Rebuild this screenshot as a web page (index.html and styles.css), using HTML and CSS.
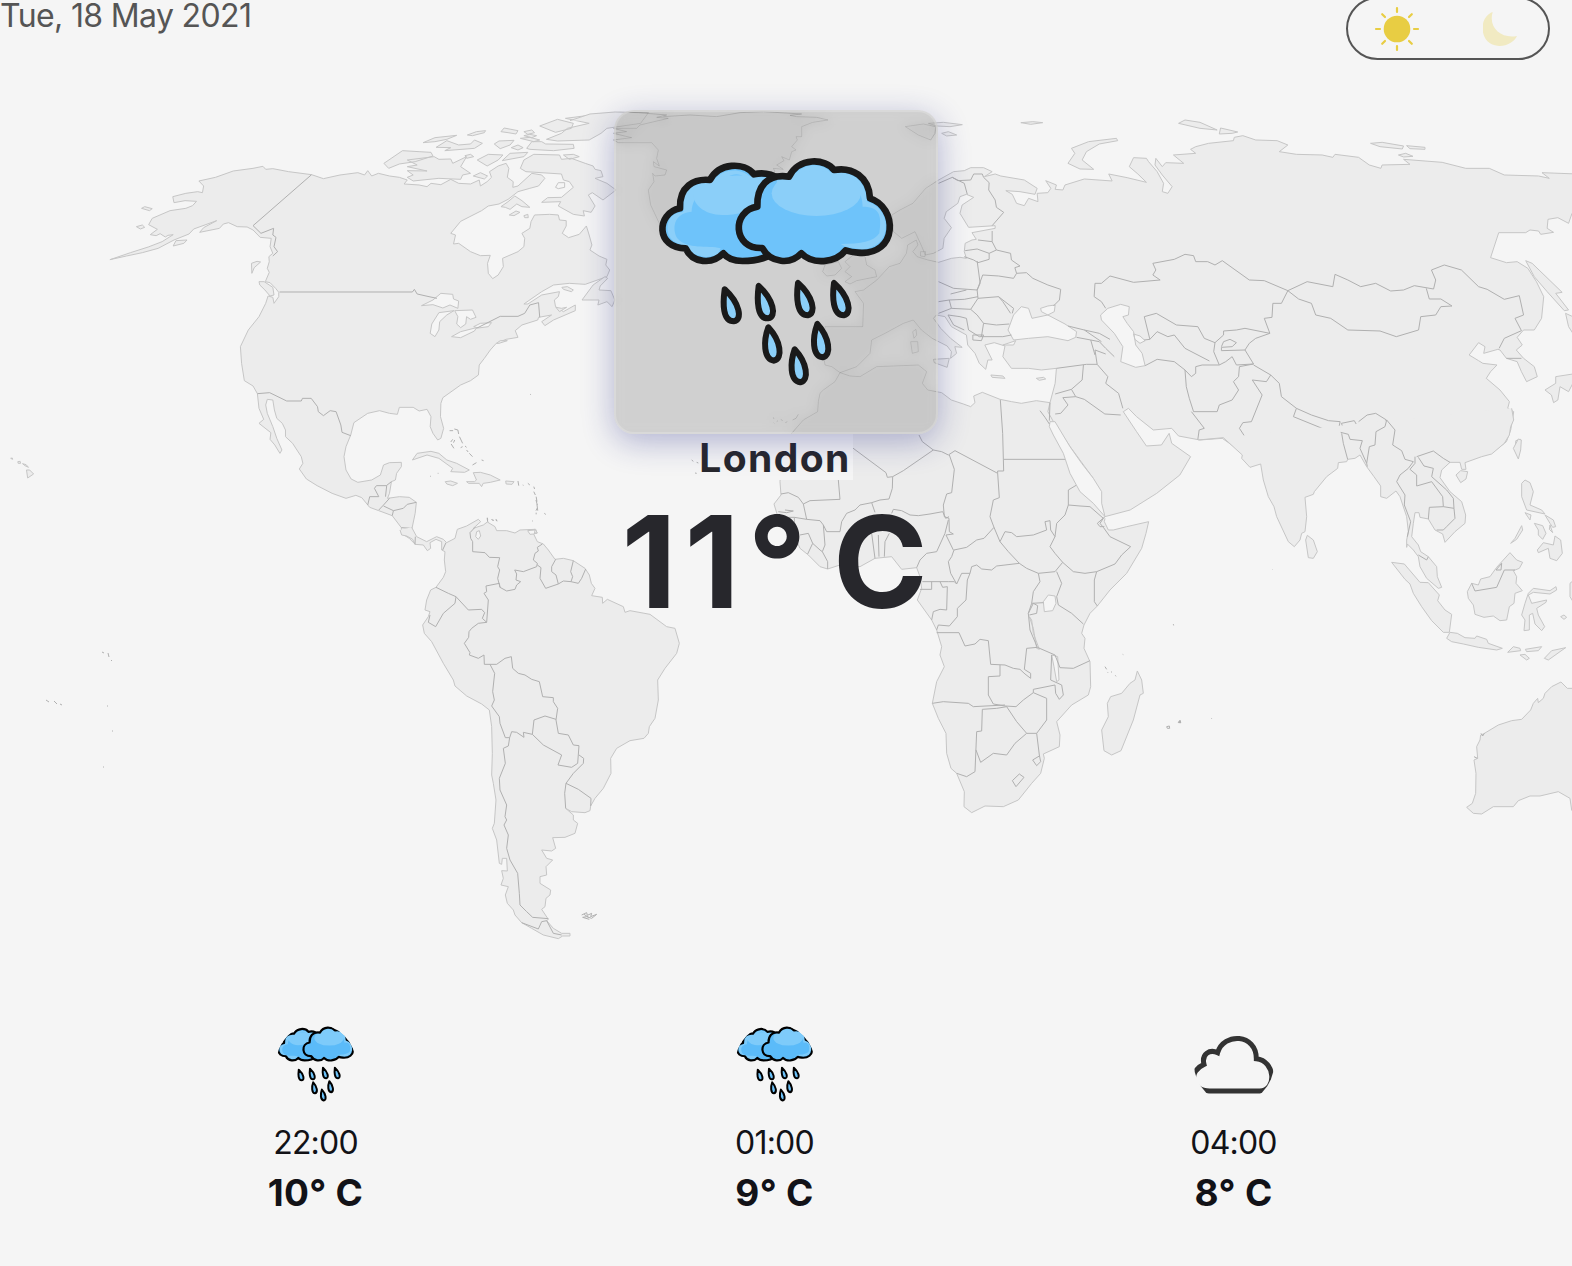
FILE: index.html
```html
<!DOCTYPE html>
<html lang="en">
<head>
<meta charset="utf-8">
<title>Weather</title>
<link rel="stylesheet" href="styles.css">
</head>
<body>
<svg class="map" viewBox="0 0 1572 1266" aria-hidden="true">
  <g id="world">
  <!-- North America -->
  <g transform="translate(0 100) scale(.3954 .33333)">
    <path class="land" d="M1050,1333L1035,1315 1015,1300 1015,1283 992,1247 958,1232 935,1222 915,1193 900,1186 875,1195 840,1180 802,1157 775,1137 757,1107 766,1090 762,1070 740,1030 722,1010 722,990 714,970 700,955 694,930 690,900 676,898 672,915 676,940 690,980 700,1015 713,1050 708,1060 695,1035 683,1018 685,998 655,970 667,958 655,925 651,881 640,858 618,842 611,790 608,740 628,690 655,650 672,610 678,588 690,592 693,610 705,590 705,577 697,565 683,548 671,545 681,517 676,505 681,485 680,470 690,460 683,440 686,415 658,412 640,390 625,381 600,380 578,368 565,372 555,385 505,397 515,383 548,362 490,387 478,402 440,420 400,445 360,458 320,468 278,479 330,458 375,441 410,425 438,404 425,406 418,411 405,401 395,407 380,404 398,388 376,374 385,355 430,332 470,325 487,317 497,304 468,302 440,308 437,290 470,280 500,275 512,278 515,258 503,243 545,232 590,213 640,205 665,199 672,208 690,206 730,215 788,224 818,236 860,225 905,218 922,225 930,212 940,228 957,220 985,228 1010,232 1030,240 1022,252 1060,255 1080,260 1090,250 1115,254 1140,238 1160,250 1190,252 1212,240 1215,258 1232,245 1243,232 1238,215 1260,198 1280,190 1287,205 1283,232 1298,245 1297,262 1310,258 1345,220 1370,225 1378,235 1362,258 1340,265 1310,275 1285,298 1262,312 1235,318 1218,332 1165,364 1140,400 1152,405 1147,432 1160,430 1190,455 1215,467 1240,466 1233,490 1235,520 1246,536 1260,525 1273,500 1271,475 1310,455 1325,440 1327,415 1320,400 1340,385 1343,365 1352,345 1390,343 1412,345 1415,360 1432,362 1432,378 1422,400 1438,413 1465,403 1483,378 1490,405 1497,435 1492,450 1515,468 1535,478 1532,495 1542,510 1535,530 1480,553 1440,550 1400,555 1370,575 1325,612 1335,612 1370,585 1415,575 1412,590 1402,600 1405,620 1425,635 1455,615 1455,632 1400,660 1378,677 1370,665 1395,645 1362,652 1360,660 1320,675 1303,692 1310,712 1280,718 1255,730 1240,750 1225,775 1212,795 1210,825 1190,842 1165,855 1120,893 1115,910 1114,950 1122,985 1115,1015 1107,1020 1095,1000 1088,980 1090,950 1080,928 1060,933 1045,922 1010,922 1005,943 985,940 960,932 930,940 895,968 887,1005 875,1040 870,1070 875,1110 888,1137 905,1147 940,1140 962,1125 970,1095 985,1088 1015,1087 1015,1100 1003,1120 1000,1140 990,1145 985,1180 980,1195 1010,1190 1035,1192 1053,1207 1050,1240 1042,1285 1040,1300 1055,1315"/>
    <path class="water" d="M1066,617L1095,600 1115,580 1145,583 1147,597 1160,603 1158,625 1138,615 1120,624 1095,614ZM1088,700L1092,672 1110,638 1148,632 1130,645 1112,665 1110,690 1100,710ZM1150,632L1195,630 1204,652 1190,658 1180,650 1178,672 1165,683 1155,672 1158,650ZM1142,710L1165,695 1205,683 1200,693 1165,713ZM1198,680L1215,670 1243,668 1235,680 1210,684Z"/>
    <path class="land" d="M1267,320L1285,305 1302,288 1320,302 1340,322 1320,320 1307,312 1290,328 1278,322ZM1288,345L1305,333 1315,337 1300,347ZM1325,347L1335,343 1336,353 1327,353ZM1472,600L1500,555 1530,530 1537,535 1518,558 1515,570 1545,572 1555,600 1548,620 1535,605 1512,615 1515,600ZM1421,562L1435,560 1450,570 1445,575 1425,568ZM1406,622L1420,625 1433,622 1415,635ZM655,545L668,545 690,562 693,585 683,588 670,570 657,555ZM637,520L636,490 650,484 659,486 643,503ZM438,438L445,422 473,420 465,430ZM358,325L366,320 385,326 378,332ZM345,380L360,375 366,382 355,387ZM971,190L1018,152 1060,155 1090,157 1095,168 1050,185 1010,192 983,205ZM1030,180L1098,170 1110,178 1140,177 1145,190 1180,170 1165,200 1190,220 1170,225 1165,238 1110,235 1045,243 1030,232 1045,225 1030,212 1080,213 1030,200 1055,195ZM1070,128L1100,113 1155,106 1130,118 1100,125ZM1103,142L1130,122 1160,135 1190,132 1200,120 1220,130 1200,145 1125,152 1140,143ZM1182,105L1205,95 1228,92 1225,98 1195,107ZM1250,132L1262,123 1300,121 1290,135 1265,146ZM1267,95L1275,84 1310,92 1305,102 1285,98ZM1325,95L1345,90 1352,98 1335,103ZM1316,115L1340,112 1365,120 1350,125ZM1332,145L1345,125 1370,125 1380,132 1450,133 1452,145 1400,152 1340,148ZM1293,143L1310,135 1323,143 1310,150ZM1325,107L1340,103 1357,107 1345,113ZM1365,78L1410,58 1450,70 1445,85 1405,97ZM1430,55L1510,43 1568,37 1640,38 1620,70 1535,85 1520,100 1490,120 1410,123 1382,118 1420,100 1435,85 1490,70ZM1207,180L1235,163 1272,165 1260,180 1232,198ZM1270,182L1290,160 1335,157 1325,170ZM1197,228L1215,218 1233,228 1225,237ZM1316,205L1325,180 1350,163 1415,165 1420,178 1445,175 1480,190 1500,198 1505,208 1520,212 1525,230 1505,235 1535,250 1558,270 1525,300 1498,278 1488,285 1505,318 1495,337 1475,332 1478,348 1450,343 1412,318 1418,305 1370,307 1385,293 1420,292 1450,262 1440,245 1425,240 1420,222 1330,215ZM1425,165L1450,163 1465,170 1440,178ZM1176,167L1190,163 1198,170 1180,175Z"/>
    <path class="water" d="M1405,262L1412,248 1428,248 1428,262 1412,266Z"/>
    <path class="land" d="M1043,1080L1055,1060 1090,1054 1110,1060 1130,1080 1155,1090 1187,1110 1175,1117 1140,1115 1145,1105 1110,1075 1080,1065ZM1180,1145L1200,1145 1205,1140 1197,1118 1215,1117 1240,1125 1265,1140 1240,1147 1222,1150 1218,1160 1212,1150 1185,1150ZM1126,1145L1140,1143 1157,1150 1145,1157 1130,1152ZM1279,1143L1300,1145 1295,1153 1280,1152ZM67,1110L75,1110 85,1122 70,1134ZM57,1091L66,1094 72,1102 63,1097ZM45,1085L51,1084 52,1090 46,1090ZM27,1075L31,1074 32,1078ZM1335,1290L1355,1288 1358,1300 1338,1302ZM1256,730L1265,722 1283,722 1262,730Z"/>
    <path class="isle" d="M1137,992L1146,992M1149,987L1158,990 1160,1002M1145,1018L1140,1026M1141,1032L1148,1045M1150,1020L1147,1028M1162,1010L1170,1030M1165,1043L1170,1040M1176,1038L1180,1042M1180,1050L1184,1056M1187,1060L1195,1070M1195,1095L1205,1088M1218,1080L1223,1082M1088,1128L1090,1130M1107,1120L1109,1120M1310,1143L1312,1157M1322,1155L1324,1156M1335,1150L1340,1155M1350,1160L1352,1167M1350,1175L1354,1185M1356,1190L1358,1205M1358,1213L1360,1232M1356,1238L1356,1243M1378,1242L1380,1243M1341,883L1343,884M1346,1263L1348,1263M1232,1255L1234,1268M1243,1258L1246,1262M1254,1257L1257,1263"/>
    <path class="border" d="M788,224L640,377 660,400 692,385 690,405 698,412 693,440 702,455 690,468M707,576L1043,576 1048,568 1055,582 1085,590 1105,595M1205,685L1265,649 1310,649 1327,640 1340,615 1362,608 1365,652M651,881L682,878 725,903 762,903 765,895 787,895 803,920 805,935 818,947 835,932 850,935 862,975 865,997 887,1007M930,1215L935,1190 958,1190 947,1165 952,1157 977,1157 990,1145M978,1157L975,1190M985,1195L970,1215 958,1230M970,1218L995,1232 1020,1225 1030,1213 1053,1207M995,1232L992,1247M1015,1283L1042,1285"/>
  </g>
  <!-- South America -->
  <g transform="translate(400 500) scale(.33333)">
    <path class="land" d="M35,82L50,110 80,125 110,110 130,118 140,128 165,115 172,88 200,78 235,58 242,65 220,85 250,75 262,66 285,80 290,92 320,92 345,99 360,90 405,88 412,98 400,100 412,125 430,132 445,150 465,178 490,175 520,182 555,205 568,225 574,250 585,265 575,287 607,292 608,310 622,298 670,320 675,337 690,332 750,343 800,380 825,385 838,430 830,460 795,505 773,540 775,600 765,655 748,680 745,700 732,715 690,722 650,745 632,775 633,820 610,865 585,895 572,918 570,932 555,938 515,935 497,925 520,945 520,960 533,970 525,1000 495,1012 458,1013 467,1045 455,1053 425,1050 440,1075 458,1080 438,1100 440,1125 420,1130 420,1150 452,1170 450,1185 438,1195 435,1220 425,1228 445,1258 440,1262 460,1285 485,1300 510,1300 510,1308 488,1308 475,1316 430,1305 395,1285 365,1268 345,1245 340,1230 322,1210 316,1185 325,1160 303,1155 310,1135 305,1112 322,1113 320,1075 307,1075 305,1093 298,1090 290,1020 277,985 283,970 288,900 280,850 275,825 277,760 275,680 268,630 245,612 200,588 165,558 160,540 130,490 95,425 73,400 68,375 85,350 90,335 75,330 80,300 92,270 108,262 130,232 137,215 133,180 135,155 125,150 125,125 108,118 90,128 92,145 82,152 70,135 45,133 38,118 20,108 5,105 0,90"/>
    <path class="water" d="M230,95L238,92 242,108 235,118 227,110ZM383,92L405,90 403,102 390,103Z"/>
    <path class="border" d="M46,110L45,133M138,128L128,150M225,82L210,98 212,115 218,125 218,155 255,158 268,172 299,173 293,200 299,210 293,235 300,262 320,273 345,268 350,255 362,245 348,240 350,222 344,210 370,215 410,200 412,190 400,180 405,160 415,153 412,142 427,132M412,195L423,203 420,235 437,265 475,252 468,225 455,215 455,200 467,178M475,252L490,243 513,245 518,230 512,215 520,182M513,245L535,250 545,235 557,207M300,262L298,250 258,258 260,275 252,280 265,300 260,367 235,370 215,385 207,395 206,412 193,430 210,458 208,465 235,475 252,465 253,493 290,493 315,475 334,470 338,505 355,520 375,525 395,538 418,545 428,590 460,593 460,605 473,625 468,660 475,700 505,705 520,735 537,737 533,790 515,802 474,795 485,765 430,735 397,703 370,697 372,712 350,697 335,695 329,713 316,713 300,670 298,650 275,618 283,600 278,575 284,520 270,493M108,262L145,280 168,290 165,310 130,340 107,380 85,367 90,345M168,290L205,330 245,328 254,338 247,355 260,367M397,703L402,660 435,648 468,658M329,713L325,738 310,745 316,790 298,835 300,870 320,915 315,950 320,960 312,975 325,1005 320,1045 330,1080 353,1120 358,1180 360,1215 380,1235 398,1252 445,1256M537,765L551,775 550,790 520,820 498,850 535,868 573,895 572,918M498,850L494,880 497,925M365,1268L415,1287 425,1265 440,1262 460,1300 485,1305"/>
    <path class="isle" d="M545,1245L560,1238 562,1246 575,1240 572,1250 590,1243 575,1255 560,1250 548,1252 568,1258M552,1243L566,1252M262,53L263,60M277,58L282,62M288,60L291,64M408,0L412,15M412,24L408,32M433,40L436,42"/>
  </g>
  <!-- Africa -->
  <g transform="translate(760 400) scale(.33333)">
    <path class="land" d="M870,8L829,2 784,10 755,5 720,-2 667,-23 641,-12 645,8 632,20 610,12 574,0 545,-22 503,-30 487,-50 500,-85 475,-105 400,-102 350,-100 300,-70 270,-72 240,-82 225,-55 190,-30 180,-20 175,5 173,35 130,60 95,100 65,180 60,245 63,285 42,312 52,345 70,360 100,400 120,445 145,465 180,500 203,507 240,495 300,500 345,475 395,470 425,508 470,503 480,530 485,565 472,600 515,660 530,690 545,740 540,765 553,800 530,845 517,910 535,955 558,1000 560,1060 573,1105 590,1120 613,1175 612,1220 635,1238 675,1218 730,1220 775,1200 815,1150 842,1120 853,1075 850,1062 898,1040 900,1005 890,965 935,915 985,885 992,860 990,785 972,745 975,715 965,700 972,675 990,640 1012,618 1050,570 1100,520 1145,445 1158,400 1166,365 1100,380 1060,390 1045,390 1033,365 1035,355"/>
    <path class="land" d="M1132,813L1145,840 1150,880 1140,885 1120,960 1083,1052 1055,1065 1032,1052 1025,990 1045,950 1042,910 1052,890 1085,880 1110,850 1125,840Z"/>
    <path class="water" d="M850,605L865,585 885,588 888,610 878,632 853,635ZM820,685L830,745 838,748 820,700 815,660 808,650ZM875,765L893,770 897,840 890,845 882,800Z"/>
    <path class="border" d="M277,143L378,218 382,232 398,230 430,212 520,150 545,155 565,165 585,152 713,220 713,213 731,213 728,100 721,0M477,105L487,125 520,150M732,178H922M713,220L718,293 700,300 690,350 702,382 672,415 650,420 620,442 582,450 575,470 565,485 572,520 590,552 583,545 565,545 487,545M568,165L583,208 575,278 560,282 550,315 553,350 567,355 568,395 580,402 558,405 580,450M398,230L397,265 387,297 360,300 335,308 345,337M395,340L400,328 425,332 450,345 475,347 510,342 548,335 557,355 567,350M335,308L300,315 285,330 260,340 245,365 240,395 200,395 190,375 180,362 140,358 130,312 150,302 240,298 235,240M63,282L85,278 115,292 130,312M140,358L103,352 55,352M55,335L80,338 100,333 75,330M103,352L103,372M190,375L195,435 187,455 203,485 203,507M120,405L145,400 158,430 180,450 187,455M158,430L143,462M335,400L345,475M355,405L357,470M388,400L375,425 373,470M470,503L480,480 500,460 530,455 555,400 565,360M480,568L515,568 515,545M540,545L548,562 562,560 560,630 540,628 520,635 515,660M530,690L535,675 568,678 592,650 592,625 618,600 622,540 630,520 605,520 590,552M630,520L635,500 650,495 665,507 695,510 710,498 778,490 745,455 720,425 702,382M720,425L735,395 755,398 770,410 820,405 860,390 855,365 870,362 872,390 885,410 870,440 885,460 908,487 885,515 835,520 800,505 778,490M885,410L890,370 915,345 925,315 960,318 990,320 1030,355 1020,370 1030,382 1050,410 1112,440 1085,465 1065,492 1010,515 975,520 940,515 908,487M925,315L925,270 950,255M1035,350L1012,370 1020,380 1033,380M1010,515L1003,540 1003,605 1012,618M890,515L905,550 890,590 895,615 935,640 970,672M835,520L840,545 820,575 815,610 850,608M815,610L805,640 810,690 832,742 800,745 793,808 812,820 812,835 795,822 780,808 760,805 735,795 692,793 685,722 660,718 645,732 615,738 597,698 530,698M720,795L720,828 685,830 685,885 700,912 735,918 768,920 790,900 820,878 860,895 860,960 830,1000 800,1000 770,965 740,920M832,742L885,765 900,803 940,805 990,782M875,765L872,840 905,855 910,885 898,898 887,880 885,855 820,868 820,878M517,910L550,905 625,910 640,920 735,915M740,920L710,925 667,928 665,993 650,995 645,1115 620,1130 590,1120M648,1050L662,1087 700,1060 740,1065 765,1030 800,1000M830,1000L838,1065 842,1085 830,1097 818,1080 838,1068M757,1142L778,1122 792,1132 768,1160ZM805,640L820,610 833,617 830,640 808,645"/>
    <path class="isle" d="M1035,800L1040,808M1042,816L1044,818M1053,815L1056,817M1066,826L1068,829M1088,763L1090,764M1240,674L1242,675M1220,980L1228,978 1229,985 1222,985ZM1256,968L1260,962 1262,968ZM-205,180L-200,184M-190,187L-185,189M-168,183L-166,186M-165,197L-162,199M-195,219L-190,220M-182,213L-177,219M-172,213L-168,215M40,52L42,57M41,68L43,70M50,65L54,62M62,58L68,62M76,68L82,65M98,60L108,55 115,43"/>
  </g>
  <!-- Greenland and the North Atlantic -->
  <g transform="translate(590 90) scale(.33333)">
    <path class="land" d="M-60,92L0,72 75,66 145,68 230,75 200,82 235,85 150,105 140,115 70,115 110,125 70,130 125,143 70,150 85,158 185,158 205,180 200,205 208,228 190,215 192,230 230,240 225,255 195,258 188,250 192,275 175,300 182,345 208,400 250,450 330,480 400,420 480,300 555,245 550,235 580,238 560,225 582,212 575,200 598,210 605,185 618,180 605,170 622,150 618,140 635,140 635,110 668,97 714,90 680,82 620,80 600,76 635,72 520,65 450,68 380,80 300,75 220,80"/>
    <path class="land" d="M946,110L1000,102 1037,110 1035,130 1022,150 985,135ZM1015,100L1060,97 1117,104 1080,110 1040,108ZM1055,130L1075,125 1100,135 1070,138ZM698,545L705,525 745,515 755,535 735,555 710,558ZM765,575L785,560 765,545 780,530 765,515 790,495 825,500 830,525 855,540 860,560 800,572 780,582ZM968,725L978,718 980,735 972,745ZM962,755L983,755 985,785 967,790Z"/>
  </g>
  <!-- Europe and northern Asia -->
  <g transform="translate(900 100) scale(.42857 .33333)">
    <path class="land" d="M1390,1050L1415,1025 1425,990 1432,935 1418,925 1422,905 1400,870 1368,835 1378,815 1393,795 1360,790 1350,782 1328,765 1350,728 1365,740 1362,760 1395,748 1400,750 1415,775 1440,785 1450,815 1462,845 1487,830 1480,800 1455,775 1438,750 1452,735 1440,712 1455,690 1480,690 1497,655 1502,590 1485,545 1465,505 1440,485 1415,488 1378,473 1397,398 1460,398 1470,390 1490,393 1495,403 1525,397 1510,385 1512,358 1535,353 1560,370 1568,340 1580,340 1580,222 1498,218 1515,235 1490,228 1410,225 1375,205 1320,205 1265,187 1175,178 1190,193 1125,195 1122,205 1095,195 1070,172 1015,163 1010,172 985,165 925,163 885,155 905,135 880,122 830,120 800,107 780,112 778,122 720,130 690,140 678,148 690,160 638,165 662,190 620,188 612,200 597,175 595,195 612,225 635,260 625,280 612,275 615,250 600,215 580,185 575,175 545,173 535,200 555,222 575,247 530,233 487,222 495,243 430,237 385,255 380,270 362,268 365,255 340,242 352,265 345,278 320,280 322,305 300,295 290,317 272,310 262,283 247,272 280,275 315,283 320,265 290,240 235,228 222,222 197,230 215,215 195,203 165,203 150,212 125,215 90,240 60,265 30,310 0,330 -19,345 -15,395 4,415 35,395 51,440 59,465 78,460 100,445 103,415 120,383 103,355 108,335 135,310 140,290 155,283 172,292 145,315 140,340 160,382 222,377 222,385 168,398 178,418 168,420 152,430 150,455 155,475 140,472 120,475 90,487 65,480 40,470 30,455 42,435 38,420 18,435 15,460 0,490 -25,500 -54,540 -85,570 -105,575 -85,610 -87,680 -175,680 -179,760 -175,795 -159,800 -140,818 -101,800 -70,760 -66,720 -35,700 8,670 31,660 50,690 75,715 110,738 120,755 118,775 132,760 128,740 145,742 118,715 95,685 78,655 85,645 105,650 120,680 155,705 158,735 175,760 185,790 200,808 205,780 215,780 198,735 220,728 245,738 240,770 260,805 300,805 330,810 365,805 362,850 350,908 345,935 358,965 397,1040 451,1135 478,1250 537,1230 599,1180 653,1125 678,1070 634,1030 628,1000 610,1035 575,1038 552,995 521,935 533,925 552,950 591,990 634,985 650,1008 700,1020 752,1015 785,1045"/>
    <path class="water" d="M252,690L265,645 283,620 300,625 308,655 345,645 385,672 412,695 410,712 392,722 345,710 300,715 265,720ZM328,625L345,618 362,615 360,635 345,645 330,635ZM485,625L515,613 535,620 533,645 520,650 530,670 545,695 550,735 565,760 572,797 550,802 515,785 520,740 500,700 470,660 468,645ZM240,735L270,722 265,735ZM545,702L560,708 572,722 560,730 548,718Z"/>
    <path class="land" d="M505,115L508,122 465,132 435,155 425,180 452,208 420,207 392,190 408,160 400,145 440,125ZM650,70L665,60 700,67 740,90 700,85ZM745,102L748,84 788,96 775,100ZM1098,130L1125,127 1175,138 1172,147 1120,140ZM1182,137L1225,142 1225,148 1190,146ZM1163,165L1180,160 1197,169 1175,171ZM282,68L310,65 333,68 305,73ZM78,778L115,775 110,802 80,788ZM212,825L240,828 245,835 215,832ZM318,835L335,832 340,837 325,841ZM48,455L60,455 58,470 48,468ZM1460,482L1475,490 1545,577 1530,580 1560,630 1550,632 1510,575 1480,530ZM1505,870L1530,850 1530,830 1570,822 1570,850 1560,875 1540,860 1535,900 1525,908 1520,885ZM1435,1050L1437,1022 1448,1018 1447,1035 1443,1062ZM1553,640L1570,650 1575,710 1560,680Z"/>
    <path class="border" d="M90,250L122,232 150,250 157,283M122,232L135,242 165,240 172,222 192,222 195,232 208,248 207,270 222,300 225,322 242,337 215,377M215,393L215,425 182,420M215,425L225,450 208,460 180,447 152,452M208,460L208,478 182,488 172,480 150,470M180,483L187,550 180,570 125,565 90,545M225,450L258,460 260,480 280,498 268,503 272,520 295,518 310,535 345,555 375,568 372,600 358,618M272,520L265,535 230,528 193,525M193,525L180,570 182,595 230,590 265,625 262,640M230,590L240,605 258,640M182,595L165,628 180,645 195,670 225,675 255,672M165,628L120,625 115,600 150,598 182,590M115,600L90,605M118,582L155,570M120,625L90,640M112,645L140,650 155,655 160,690 185,710 240,710 260,705M195,670L190,710M112,645L125,675 150,690M170,705L195,705 190,722 170,720ZM392,678L430,690 465,700 490,718M412,712L445,720 465,725 480,745 500,770M430,690L470,725M445,720L455,765M365,805L435,793 460,793 485,830 480,850 510,880 520,925M428,795L425,840 400,868 362,882M400,868L410,890 380,893 392,915 375,940 362,942M410,890L430,898 478,942 515,945M460,793L455,750 480,762M480,625L470,605 453,590 455,550 470,550 490,528 545,547 607,540 590,525 597,510 590,490 640,478 665,463 685,467 690,485 718,485 735,495 752,482 815,540 850,542 905,572 890,610 870,610 868,652 850,655 863,700 805,685 785,690 755,693 755,705 735,728 710,715 695,680 645,675 598,640 570,650 583,718 600,695 625,710 640,705 665,745 722,783M583,718L570,720M735,728L732,755 745,795 760,785 775,770 785,795 825,792 805,750 750,752 750,742 775,740 785,728 770,718 755,725 750,740M805,750L815,730 830,715 863,700M905,572L950,545 1010,560 1015,523 1045,540 1075,560 1110,550 1145,573 1175,570 1200,557 1245,567 1250,540 1240,510 1270,495 1310,510 1350,560 1370,568 1410,598 1445,587 1455,645 1435,655 1450,692 1410,715 1398,745M905,572L930,597 960,610 970,645 1005,655 1045,690 1120,693 1158,710 1210,690 1215,650 1250,645 1262,620 1288,618 1262,597 1235,597 1228,565M1415,775L1450,775M572,797L600,778 640,785 665,810 668,860 675,895 685,935 740,935 745,915 775,900 790,870 778,845 790,830 792,800 825,792M665,810L680,830 690,820 690,800 705,795 745,795M680,935L710,985 698,990 695,1018M825,795L865,825 855,845 822,840 845,885 820,965 800,968 792,985 815,1030 785,1035M865,825L885,850 890,890 925,925 960,945 1000,962 1027,965 1022,995 985,985 918,950 925,925M1030,970L1060,962 1070,985 1035,987ZM1070,965L1090,945 1110,940 1135,960 1120,985"/>
  </g>
  <!-- Red Sea -->
  <g transform="translate(760 400) scale(.33333)">
    <path class="water" d="M870,65L885,65 930,140 965,190 1000,235 1025,275 1025,310 1035,350 1000,310 960,275 930,220 910,160 880,105 868,80Z"/>
    <path class="isle" d="M868,72L855,52 840,32M868,62L870,8"/>
  </g>
  <!-- South and Southeast Asia, Australia -->
  <g transform="translate(1170 380) scale(.33333)">
    <path class="land" d="M1025,85L1031,120 1022,140 1018,165 1003,190 965,222 935,230 885,248 888,268 875,268 870,247 840,247 815,270 810,293 840,335 875,365 887,405 885,430 855,455 825,487 818,462 795,450 775,417 750,412 747,398 735,398 730,430 725,470 745,495 752,515 775,530 800,560 802,590 815,622 805,625 770,595 750,560 745,530 730,510 712,492 710,502 710,480 715,455 710,410 690,350 678,333 650,355 632,350 632,318 612,290 590,260 570,225 555,235 533,238 530,245 505,248 503,265 470,290 433,335 430,343 405,352 410,410 405,455 395,460 390,480 373,500 355,485 320,410 312,380 295,350 280,300 272,252 240,262 215,235 217,225 195,205 160,173 85,180"/>
    <path class="land" d="M407,480L412,466 430,480 442,515 430,535 415,533ZM858,285L872,272 893,275 888,297 872,308ZM1030,205L1045,177 1054,180 1052,210 1045,237ZM665,547L703,552 750,607 775,608 808,645 803,662 825,690 845,703 838,757 820,757 785,722 755,680 730,640 720,612 705,598ZM830,775L840,757 862,760 885,773 915,775 920,768 950,778 955,790 997,805 980,810 925,802 880,792 845,785ZM892,635L905,610 925,615 932,597 960,590 980,562 1020,518 1040,540 1058,547 1048,565 1030,572 1040,590 1038,610 1057,632 1035,640 1032,670 1018,680 1010,720 990,722 970,708 942,712 915,703 910,675 895,655ZM1075,640L1090,625 1140,632 1158,620 1160,630 1140,642 1090,637 1075,645 1085,670 1130,660 1128,667 1100,685 1105,705 1124,740 1115,752 1095,732 1088,700 1078,705 1078,750 1062,752 1065,720 1055,705 1065,670ZM1055,310L1065,300 1080,308 1090,335 1080,375 1115,390 1125,402 1070,390 1055,350ZM1125,405L1150,420 1157,440 1148,442 1140,430ZM1065,398L1083,405 1080,420ZM1093,430L1118,437 1128,460 1118,478 1105,465 1105,450ZM1140,435L1148,458 1138,448ZM1102,510L1120,488 1150,495 1155,468 1172,480 1177,520 1160,542 1140,535 1135,505 1105,518ZM1022,490L1035,475 1055,437 1058,450 1040,478ZM1013,817L1030,800 1050,805 1052,812ZM1066,808L1115,800 1105,812 1070,815ZM1050,825L1065,823 1078,835 1070,840ZM1123,835L1145,812 1187,803 1170,815 1135,840ZM1172,710L1182,705 1190,712 1182,718ZM1200,610L1212,600 1212,670 1200,650Z"/>
    <path class="land" d="M1215,925L1192,925 1173,906 1145,920 1125,940 1120,955 1105,968 1103,955 1090,970 1082,990 1055,1018 1025,1022 985,1035 940,1062 932,1065 930,1080 920,1100 923,1135 912,1140 918,1180 917,1240 907,1270 890,1282 910,1300 935,1302 970,1280 1030,1280 1045,1262 1080,1248 1110,1248 1165,1235 1200,1255 1205,1290 1220,1310 1220,930"/>
    <path class="border" d="M512,157L535,163 540,178 577,182 570,205 590,250 592,260M515,160L520,190 533,238M590,250L598,200 615,195 618,155 645,140 650,120 675,150 668,195 695,212 705,238 730,245 715,265 690,285 680,305 705,345 703,375 722,425 712,470M735,230L735,250 720,268 740,285 740,318 785,305 818,350 820,380 778,382 775,417M740,230L790,213 820,235 840,247M745,232L762,258 790,265 785,290 830,330 850,355 852,385 820,380M852,385L855,415 830,440 820,450 800,450M745,525L770,540 775,530M905,610L915,633 980,622 1003,570 1035,570M978,570L995,550 993,570Z"/>
    <path class="isle" d="M10,733L11,736M124,1014L125,1016M25,1027L30,1021 32,1028ZM307,568L308,569M933,1060L938,1068 943,1060M912,1130L922,1135"/>
  </g>
  <!-- Pacific islands -->
  <path class="isle" d="M102,652l2,1M108,653l1,4M111,660l1,1M46,700l3,2M54,701l3,3M60,704l2,1M107,706h1M112,731h1M103,767h1"/>
  </g>
</svg>

<svg class="defs" aria-hidden="true">
  <symbol id="rain" viewBox="195 182 727 727">
      <path class="cloud-base" d="M268,355C265,290 310,265 358,270C385,218 460,215 490,253C520,245 560,252 590,290L560,480C530,508 490,513 455,513C430,513 410,505 398,490C365,525 305,520 285,475C195,475 195,370 268,355Z"/>
      <path class="rim" d="M232,400C240,370 262,368 278,366L280,310C305,275 340,285 364,282C385,235 450,230 480,262L530,262 510,290 480,285C460,240 410,245 395,285C345,285 305,315 303,365C245,370 245,420 260,445C290,480 350,465 390,475L380,495 345,502 300,490 285,467C245,460 225,440 232,400Z"/>
      <path class="shine" d="M308,300C300,340 340,375 395,375C440,375 470,365 495,350C500,310 510,290 520,270C480,245 330,255 308,300Z"/>
      <path class="outline" d="M268,355C265,290 310,265 358,270C385,218 460,215 490,253C520,245 560,252 590,290L560,480C530,508 490,513 455,513C430,513 410,505 398,490C365,525 305,520 285,475C195,475 195,370 268,355Z"/>
      <path class="cloud-base" d="M500,350C498,290 530,250 595,260C625,200 705,205 730,240C785,230 835,260 838,325C920,350 925,498 802,488C790,487 778,485 765,481C735,520 665,525 632,490C600,525 540,520 515,474C425,478 422,362 500,350Z"/>
      <path class="rim" d="M560,271L602,270C630,215 695,215 722,250C780,240 825,265 830,335C905,355 910,475 810,478L765,470 750,462C810,462 850,455 866,430C873,380 870,350 816,350C815,300 790,270 715,278C690,235 640,235 622,278C590,275 570,285 555,290Z"/>
      <ellipse class="shine" cx="677" cy="310" rx="134" ry="68"/>
      <path class="outline" d="M500,350C498,290 530,250 595,260C625,200 705,205 730,240C785,230 835,260 838,325C920,350 925,498 802,488C790,487 778,485 765,481C735,520 665,525 632,490C600,525 540,520 515,474C425,478 422,362 500,350Z"/>
      <g class="drop">
        <path d="M402,598C396,642 396,694 429,694C458,690 446,638 402,598Z"/>
        <path d="M504,588C498,632 500,686 532,685C560,680 548,628 504,588Z"/>
        <path d="M622,579C616,623 619,676 651,676C679,670 666,618 622,579Z"/>
        <path d="M730,579C724,623 727,676 759,676C787,670 774,618 730,579Z"/>
        <path d="M533,712C518,752 518,808 550,812C578,805 570,752 533,712Z"/>
        <path d="M680,702C665,742 664,798 696,802C724,795 716,742 680,702Z"/>
        <path d="M612,778C598,818 597,872 629,877C657,870 649,818 612,778Z"/>
      </g>
  </symbol>
</svg>

<div class="page">
  <header class="top">
    <p class="date">Tue, 18 May 2021</p>
    <div class="toggle">
      <svg width="46" height="46" viewBox="-23 -23 46 46"><circle r="13.3" fill="#e8cd43"/><path d="M0-17V-21M0 17V21M-17 0H-21M17 0H21M-12-12L-14.8-14.8M12-12L14.8-14.8M-12 12L-14.8 14.8M12 12L14.8 14.8" stroke="#e8cd43" stroke-width="2.2" stroke-linecap="round"/></svg>
      <svg width="34" height="34" viewBox="489 36 102 102"><path fill="#f1eac2" d="M518,36C480,50 478,108 510,130C542,148 580,132 591,108C545,117 504,85 518,36Z"/></svg>
    </div>
  </header>
  <main class="now">
    <div class="card">
      <svg class="inset" viewBox="616 112 320 320"><use href="#world"/></svg>
      <svg class="weather" viewBox="76 66 960 960"><use href="#rain" x="195" y="182" width="727" height="727"/></svg>
    </div>
    <h1 class="city">London</h1>
    <p class="temp">11° C</p>
  </main>
  <section class="forecast">
    <div class="slot"><svg class="icon small-rain"><use href="#rain"/></svg><p class="time">22:00</p><p class="deg">10° C</p></div>
    <div class="slot"><svg class="icon small-rain"><use href="#rain"/></svg><p class="time">01:00</p><p class="deg">9° C</p></div>
    <div class="slot"><svg class="icon" viewBox="103 42 240 240"><path fill="none" stroke="#333" stroke-width="15" d="M150,243C94,243 84,184 133,163C125,132 150,117 174,128C192,67 290,70 290,146C348,152 352,243 300,243Z"/></svg><p class="time">04:00</p><p class="deg">8° C</p></div>
  </section>
</div>
</body>
</html>
```
FILE: styles.css
```css
* { box-sizing: border-box; margin: 0; padding: 0; }

body {
  height: 1266px;
  overflow: hidden;
  background: #f5f5f5;
  color: #121217;
  font-family: Inter, "Liberation Sans", sans-serif;
}

.map { position: absolute; inset: 0; width: 1572px; height: 1266px; z-index: -1; }
#world path { vector-effect: non-scaling-stroke; stroke-width: 1; stroke-linejoin: round; }
.land { fill: var(--land, #ececec); stroke: var(--coast, #c6c6c6); }
.water { fill: var(--sea, #f5f5f5); stroke: var(--coast, #c6c6c6); }
.border, .isle { fill: none; stroke: var(--line, #b0b0b0); }

.defs { position: absolute; width: 0; height: 0; }
.cloud-base { fill: var(--cloud, #5bbbf9); }
.rim, .shine { fill: var(--cloud-light, #7ecbfa); }
.outline { fill: none; stroke: var(--ink, #000); stroke-width: 20; stroke-linejoin: round; }
.drop path { fill: var(--cloud-light, #6cc2f9); stroke: var(--ink, #000); stroke-width: 18; stroke-linejoin: round; }

.page { width: 1552px; }

.top { display: flex; justify-content: space-between; height: 110px; padding-right: 2px; }
.date { height: 39px; color: #555; font-size: 32px; line-height: 32px; letter-spacing: -.64px; }
.toggle {
  display: flex;
  align-items: center;
  justify-content: space-between;
  width: 204px;
  height: 63px;
  margin-top: -3px;
  padding: 0 31px 0 26px;
  border: 2px solid #555;
  border-radius: 32px;
}

.now { display: flex; flex-direction: column; align-items: center; }
.card {
  --land: none;
  --sea: none;
  --coast: rgba(0, 0, 0, .1);
  --line: rgba(0, 0, 0, .13);
  --ink: #1a1a1a;
  --cloud: #6ec3fa;
  --cloud-light: #8bcff9;
  display: grid;
  position: relative;
  width: 324px;
  height: 324px;
  overflow: hidden;
  border: 2px solid rgba(255, 255, 255, .18);
  border-radius: 20px;
  background: rgba(0, 0, 0, .15);
  box-shadow: 0 8px 32px rgba(31, 38, 135, .32);
  backdrop-filter: blur(6px);
}
.card svg { grid-area: 1 / 1; width: 320px; height: 320px; }
.city {
  height: 46px;
  background: #f5f5f5;
  color: #27272c;
  font-size: 39px;
  font-weight: 700;
  line-height: 48px;
  letter-spacing: 1.4px;
  padding-right: 2px;
}
.temp {
  color: #27272c;
  font-size: 128px;
  font-weight: 700;
  line-height: 156px;
  margin-top: 4px;
  padding-left: 5px;
  letter-spacing: 8px;
  word-spacing: -20px;
}

.forecast {
  display: grid;
  grid-template-columns: repeat(3, 459px);
  margin: 384px 0 0 86px;
}
.slot { display: flex; flex-direction: column; align-items: center; }
.icon { display: block; width: 80px; height: 80px; border-radius: 50%; overflow: hidden; }
.time { margin-top: 19px; font-size: 32px; line-height: 40px; letter-spacing: -.8px; }
.deg { margin-top: 6px; font-size: 37px; font-weight: 700; line-height: 48px; letter-spacing: .3px; }
```
